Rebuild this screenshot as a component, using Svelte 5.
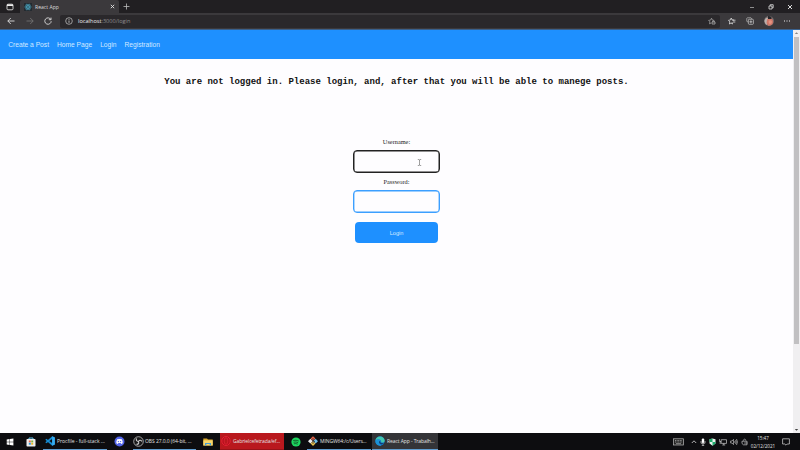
<script>
  const links = ['Create a Post', 'Home Page', 'Login', 'Registration'];
</script>

<div class="screen">
  <div class="tabs">
    <div class="tabmenu">
      <svg width="8" height="8" viewBox="0 0 8 8"><rect x="1" y="1.2" width="6" height="5.6" rx="1" fill="none" stroke="#ddd" stroke-width=".9" /><path d="M1 2.2H7" stroke="#eee" stroke-width="1.6" /></svg>
    </div>
    <div class="tab">
      <svg width="8" height="8" viewBox="0 0 8 8"><rect width="8" height="8" fill="#242a30" /><g fill="none" stroke="#4ba9c4" stroke-width=".6"><ellipse cx="4" cy="4" rx="3.3" ry="1.3" /><ellipse cx="4" cy="4" rx="3.3" ry="1.3" transform="rotate(60 4 4)" /><ellipse cx="4" cy="4" rx="3.3" ry="1.3" transform="rotate(120 4 4)" /></g><circle cx="4" cy="4" r=".7" fill="#4ba9c4" /></svg>
      <span>React App</span>
      <svg class="close" width="5" height="5" viewBox="0 0 5 5"><path d="M.8 .8L4.2 4.2M4.2 .8L.8 4.2" stroke="#e4e4e4" stroke-width=".9" /></svg>
    </div>
    <svg class="plus" width="7" height="7" viewBox="0 0 7 7"><path d="M3.5 .5V6.5M.5 3.5H6.5" stroke="#bbb" stroke-width=".8" /></svg>
    <div class="window">
      <svg width="8" height="8" viewBox="0 0 8 8"><path d="M2 4.5H6" stroke="#aaa" stroke-width=".8" /></svg>
      <svg width="8" height="8" viewBox="0 0 8 8"><path d="M2 3H5V6H2ZM3.2 3V1.7H6.2V4.8H5" fill="none" stroke="#ddd" stroke-width=".8" /></svg>
      <svg width="8" height="8" viewBox="0 0 8 8"><path d="M2 2L6 6M6 2L2 6" stroke="#eee" stroke-width=".9" /></svg>
    </div>
  </div>

  <div class="toolbar">
    <svg class="back" width="8" height="8" viewBox="0 0 8 8"><path d="M7.5 4H.8M3.8 1L.8 4L3.8 7" fill="none" stroke="#ddd" stroke-width=".9" /></svg>
    <svg class="fwd" width="8" height="8" viewBox="0 0 8 8"><path d="M.5 4H7.2M4.2 1L7.2 4L4.2 7" fill="none" stroke="#777" stroke-width=".8" /></svg>
    <svg class="reload" width="8" height="8" viewBox="0 0 8 8"><path d="M6.8 2.5A3.2 3.2 0 1 0 7.2 4.2M7 .6V2.7H4.8" fill="none" stroke="#ddd" stroke-width=".9" /></svg>
    <div class="address">
      <svg width="8" height="8" viewBox="0 0 8 8"><circle cx="4" cy="4" r="3.3" fill="none" stroke="#ccc" stroke-width=".7" /><path d="M4 3.5V5.8M4 2V2.8" stroke="#ddd" stroke-width=".8" /></svg>
      <span class="url"><b>localhost</b>:3000/login</span>
      <svg class="star" width="8" height="8" viewBox="0 0 8 8"><path d="M3 6L1.5 6.8L1.9 4.8L.6 3.4L2.6 3.1L3.5 1.2L4.4 3.1L6.2 3.4" fill="none" stroke="#aaa" stroke-width=".7" /><path d="M4 7V5H7V7ZM4.7 5V4H6.3V5" fill="none" stroke="#aaa" stroke-width=".8" /></svg>
    </div>
    <div class="actions">
      <svg width="8" height="8" viewBox="0 0 8 8"><path d="M3.2 1L4 2.9L6 3.1M4.1 5.2L4.5 7L3 6L1.4 7L1.8 4.9L.5 3.3L2.5 2.9L3.2 1M4.5 3.2H7.5M5 5H7.3" fill="none" stroke="#ddd" stroke-width=".8" /></svg>
      <svg width="8" height="8" viewBox="0 0 8 8"><path d="M2 5L.8 4.4V1.3L1.3 .8H5L6 2" fill="none" stroke="#bbb" stroke-width=".7" /><rect x="2.4" y="2.3" width="5" height="5" rx=".8" fill="none" stroke="#ccc" stroke-width=".7" /><path d="M4.9 3.3V6.3M3.4 4.8H6.4" stroke="#ddd" stroke-width=".7" /></svg>
      <svg class="avatar" width="10" height="10" viewBox="0 0 10 10"><circle cx="5" cy="5" r="4.9" fill="#776f70" /><path d="M.4 5C1 2 3 1 4 2L3 9Q1 8 .4 5Z" fill="#bbb1ae" /><path d="M3 4Q4 1 7 2Q10 4 8.5 8Q7 10 4 9.6L2.5 7Z" fill="#cf7768" /><path d="M4 0Q8 0 7.5 3L4 3Z" fill="#252529" /><path d="M4.7 5Q6 3.5 7.8 5V7Q6 9 4.8 7Z" fill="#e69280" /></svg>
      <svg width="8" height="8" viewBox="0 0 8 8"><path d="M1 4H2M3.5 4H4.5M6 4H7" stroke="#eee" stroke-width="1" /></svg>
    </div>
  </div>

  <div class="view">
    <div class="page">
      <nav>{#each links as link}<span>{link}</span>{/each}</nav>
      <h1>You are not logged in. Please login, and, after that you will be able to manege posts.</h1>
      <div class="form">
        <label for="user">Username:</label>
        <div class="field focus"><input id="user" type="text" />
          <svg class="cursor" width="5" height="7" viewBox="0 0 5 7"><path d="M.8 .5H2L2.5 .9L3 .5H4.2M2.5 .9V6.1M.8 6.5H2L2.5 6.1L3 6.5H4.2" fill="none" stroke="#777" stroke-width=".7" /></svg>
        </div>
        <label for="pass">Password:</label>
        <div class="field"><input id="pass" type="password" /></div>
        <button>Login</button>
      </div>
    </div>
    <div class="scroll">
      <svg width="7" height="6" viewBox="0 0 7 6"><path d="M1.8 4L3.5 2.2L5.2 4Z" fill="#888" /></svg>
      <div class="thumb"></div>
      <svg class="down" width="7" height="6" viewBox="0 0 7 6"><path d="M1.8 2L3.5 3.8L5.2 2Z" fill="#444" /></svg>
    </div>
  </div>

  <div class="taskbar">
    <div class="cell start"><svg width="8" height="8" viewBox="0 0 8 8"><path d="M.7 1.4L3.6 1V3.8H.7ZM4 .9L7.4 .5V3.8H4ZM.7 4.2H3.6V7L.7 6.6ZM4 4.2H7.4V7.5L4 7.1Z" fill="#fff" /></svg></div>
    <div class="cell store"><svg width="10" height="10" viewBox="0 0 10 10"><path d="M3 2.5V1H7V2.5" fill="none" stroke="#64c7ee" stroke-width="1" /><rect x=".5" y="2" width="9" height="7.5" rx=".8" fill="#eee" /><path d="M2.8 3.5H4.8V5.4H2.8Z" fill="#ee6548" /><path d="M5.2 3.5H7.2V5.4H5.2Z" fill="#86b93d" /><path d="M2.8 5.8H4.8V7.7H2.8Z" fill="#2b9bda" /><path d="M5.2 5.8H7.2V7.7H5.2Z" fill="#efb529" /></svg></div>
    <div class="cell app code"><svg width="10" height="10" viewBox="0 0 10 10"><path d="M7.2 .3L9.8 1.4V8.6L7.2 9.7L.3 3.7L1.4 2.7L7.1 7.1V2.9L1.4 7.3L.3 6.3Z" fill="#168bd2" /><path d="M7.2 .3L9.8 1.4V8.6L7.2 9.7Z" fill="#38adf1" /></svg><span>Procfile - full-stack ...</span></div>
    <div class="cell discord"><svg width="11" height="11" viewBox="0 0 11 11"><circle cx="5.5" cy="5.5" r="5" fill="#5365e9" /><path d="M3.2 3.3Q5.5 2.5 7.8 3.3Q9 5.3 8.6 7.2L7.2 7.9L6.6 7.1H4.4L3.8 7.9L2.4 7.2Q2 5.3 3.2 3.3Z" fill="#fff" /><circle cx="4.4" cy="5.6" r=".7" fill="#5365e9" /><circle cx="6.6" cy="5.6" r=".7" fill="#5365e9" /></svg></div>
    <div class="cell app obs"><svg width="11" height="11" viewBox="0 0 11 11"><circle cx="5.5" cy="5.5" r="4.8" fill="#181819" stroke="#ddd" stroke-width=".7" /><path d="M5.4 5.5Q2.5 5 3.6 2.5M5.4 5.5Q7.1 3 9 5.5M5.4 5.5Q6.7 8.4 3.5 8.4" fill="none" stroke="#ccc" stroke-width="1.1" /></svg><span>OBS 27.0.0 (64-bit, ...</span></div>
    <div class="cell folder"><svg width="10" height="8" viewBox="0 0 10 8"><path d="M.3 .6H4L5 1.5H9.7V7.4H.3Z" fill="#d9a72c" /><path d="M.3 2.3H9.7V7.5H.3Z" fill="#f8d66c" /><path d="M2 7.5V5H8V7.5H6.7V6H3.3V7.5Z" fill="#469ed5" /></svg></div>
    <div class="cell app red"><svg width="10" height="10" viewBox="0 0 10 10"><ellipse cx="5" cy="5" rx="4.2" ry="4.5" fill="#b5101c" stroke="#ee2639" stroke-width=".8" /><ellipse cx="5" cy="5" rx="1.9" ry="3.3" fill="#b9181e" stroke="#e22537" stroke-width=".7" /></svg><span>Gabrielcefetrada/ef...</span></div>
    <div class="cell spotify"><svg width="10" height="10" viewBox="0 0 10 10"><circle cx="5" cy="5" r="4.6" fill="#1ed760" /><path d="M2.2 3.5Q5 2.7 7.8 4M2.5 5.2Q5 4.5 7.2 5.7M2.8 6.8Q5 6.2 6.8 7.2" fill="none" stroke="#104a25" stroke-width=".8" /></svg></div>
    <div class="cell app git"><svg width="10" height="10" viewBox="0 0 10 10"><path d="M5 .2L7.4 2.6L5 5L2.6 2.6Z" fill="#e96349" /><path d="M2.4 2.8L4.8 5.2L2.4 7.6L0 5.2Z" fill="#eee" /><path d="M7.6 2.8L10 5.2L7.6 7.6L5.2 5.2Z" fill="#6abce8" /><path d="M5 5.2L7.4 7.6L5 10L2.6 7.6Z" fill="#edc34d" /><path d="M5 2V8M5 4L7 6" stroke="#333" stroke-width=".8" /></svg><span>MINGW64:/c/Users...</span></div>
    <div class="cell app edge"><svg width="10" height="10" viewBox="0 0 10 10"><circle cx="5" cy="5" r="4.7" fill="#1476c6" /><path d="M.4 4.5C1-.8 9-1 9.7 4.4C9.8 6.4 7.8 7 6.1 6.3C6.8 4 3.3 2.5 .4 4.5Z" fill="#42c7b1" /><path d="M.4 4.5C2 2.7 5 3.1 5.5 4.4C3.3 5.1 4 8.6 6.3 9.4C3.3 10.4 .1 8 .4 4.5Z" fill="#1b92d8" /><path d="M5.3 4.5C4 6 6.3 7.7 8.9 7C7.4 9.2 3.7 8.3 4 5.7Z" fill="#103e75" /></svg><span>React App - Trabalh...</span></div>
    <div class="tray">
      <svg class="keyboard" width="11" height="8" viewBox="0 0 11 8"><rect x=".5" y=".8" width="10" height="6.2" fill="#242424" stroke="#bbb" stroke-width=".7" /><path d="M2 2.5H9M2 4H9" stroke="#aaa" stroke-width=".8" stroke-dasharray="1 .6" /><path d="M3 5.7H8" stroke="#bbb" stroke-width=".7" /></svg>
      <svg width="6" height="8" viewBox="0 0 6 8"><path d="M.8 5L3 2.8L5.2 5" fill="none" stroke="#ddd" stroke-width=".8" /></svg>
      <svg width="6" height="8" viewBox="0 0 6 8"><rect x="1.8" y=".5" width="2.4" height="4.4" rx="1" fill="#fff" /><path d="M1 3V5.2H5V3M3 5V7.5M1.8 7.4H4.2" fill="none" stroke="#ddd" stroke-width=".7" /></svg>
      <svg width="7" height="8" viewBox="0 0 7 8"><path d="M.5 1.3L3.5 .5L6.5 1.3V5.5L3.5 7.7L.5 5.5Z" fill="#e9f4ee" /><path d="M.5 1.3L3.5 .5V4H6.5V5.5L3.5 7.7V4H.5Z" fill="#1fac6d" /></svg>
      <svg width="8" height="8" viewBox="0 0 8 8"><path d="M2.2 1.7H7.5V5.4H2.2ZM4.8 5.4V7M3.3 7H6.2M.6 1V3.5H2M1.2 3.5V6" fill="none" stroke="#ccc" stroke-width=".7" /></svg>
      <svg width="8" height="8" viewBox="0 0 8 8"><path d="M.6 3H2L3.5 1.4V6.6L2 5H.6ZM4.7 3Q5.5 4 4.7 5M5.6 2Q7 4 5.6 6M6.5 1Q8.4 4 6.5 7" fill="none" stroke="#bbb" stroke-width=".7" /></svg>
      <svg width="7" height="8" viewBox="0 0 7 8"><path d="M1 3.2H6V6.8H2.5L1 5.5ZM2 2.5Q3.5 0 5 2.2M3.2 5H6.4" fill="none" stroke="#ccc" stroke-width=".7" /></svg>
    </div>
    <div class="clock"><span>15:47</span><span>02/12/2021</span></div>
    <svg class="notice" width="8" height="8" viewBox="0 0 8 8"><path d="M.6 .8H7.4V6H5.2L4 7.2L2.8 6H.6Z" fill="none" stroke="#ddd" stroke-width=".7" /></svg>
  </div>
</div>

<style>
  .screen { width: 800px; height: 450px; display: flex; flex-direction: column; overflow: hidden; background: #fefdff; font-family: "Open Sans", "Noto Sans", sans-serif; }
  svg { display: block; flex: none; }
  .tabs { height: 13px; display: flex; align-items: center; background: #211f22; flex: none; }
  .tabmenu { width: 20px; padding-left: 6px; box-sizing: border-box; }
  .tab { width: 99px; height: 13px; display: flex; align-items: center; box-sizing: border-box; padding: 0 4px; gap: 3px; background: #3b393c; color: #ddd; font-size: 5.1px; border-radius: 2px 2px 0 0; }
  .close { margin-left: auto; }
  .plus { margin-left: 4px; }
  .window { margin-left: auto; display: flex; gap: 11px; padding-right: 6px; }
  .toolbar { height: 17px; flex: none; display: flex; align-items: center; background: #3b393c; padding-left: 7px; border-bottom: 1px solid #39618e; box-sizing: border-box; }
  .fwd { margin-left: 11px; }
  .reload { margin-left: 10px; }
  .address { display: flex; align-items: center; width: 660px; height: 13px; margin-left: 8px; padding: 0 4px 0 5px; box-sizing: border-box; background: #2a282b; border-radius: 2px; }
  .url { margin-left: 5px; color: #8e8c8f; font-size: 5.6px; white-space: nowrap; }
  .url b { font-weight: 400; color: #eee; }
  .star { margin-left: auto; }
  .actions { display: flex; align-items: center; gap: 10px; margin-left: 8px; }
  .avatar { margin-right: -1px; }
  .view { flex: 1; min-height: 0; display: flex; }
  .page { flex: 1; display: flex; flex-direction: column; align-items: center; }
  nav { align-self: stretch; height: 29px; flex: none; display: flex; align-items: center; gap: 8px; padding-left: 8.3px; box-sizing: border-box; background: #1e90ff; color: #d3e9ff; font: 6.67px "Liberation Sans", Arial, sans-serif; }
  h1 { margin: 18px 0 0; height: 10px; font: bold 9px/10px "Liberation Mono", "Courier New", monospace; color: #111; white-space: nowrap; }
  .form { display: flex; flex-direction: column; align-items: center; margin-top: 51px; }
  label { height: 8px; font: 6.3px/8px "Liberation Serif", serif; color: #222; }
  .field { position: relative; width: 87px; height: 23px; margin: 4px 0 5px; }
  input { display: block; width: 100%; height: 100%; box-sizing: border-box; border: 1px solid #3c9fff; box-shadow: inset 0 0 0 .4px #3c9fff; border-radius: 4px; background: #fefdff; outline: none; }
  .focus input { border-color: #222; box-shadow: inset 0 0 0 .5px #222; }
  .cursor { position: absolute; left: 64px; top: 9px; }
  button { width: 83px; height: 21px; margin-top: 4px; padding: 0; border: 0; border-radius: 4px; background: #1e90ff; color: #d3e9ff; font: 5.6px "Liberation Sans", Arial, sans-serif; }
  .scroll { width: 7px; display: flex; flex-direction: column; align-items: center; background: #f0eff1; }
  .thumb { width: 5px; height: 307px; margin-top: 1px; background: #c1c0c2; }
  .down { margin-top: auto; }
  .taskbar { height: 17px; flex: none; display: flex; align-items: stretch; background: #0d0d10; color: #e2e2e2; }
  .cell { display: flex; align-items: center; justify-content: center; flex: none; }
  .start { width: 20px; }
  .store { width: 22px; }
  .discord { width: 25px; }
  .folder { width: 24px; }
  .spotify { width: 23px; }
  .app { justify-content: flex-start; box-sizing: border-box; padding-left: 2px; gap: 2px; border-bottom: 1px solid #5f9dd1; font-size: 5px; white-space: nowrap; }
  .code { width: 64px; margin-left: 1px; }
  .obs { width: 63px; margin-left: 1px; padding-left: 0; gap: 1px; }
  .obs span { letter-spacing: -.06px; }
  .red { width: 64px; background: #b9181e; border-color: #971319; padding-left: 1px; }
  .red span { letter-spacing: -.1px; }
  .git { width: 64px; margin-right: 1px; padding-left: 1px; }
  .git span { letter-spacing: -.09px; }
  .edge { width: 66px; padding-left: 3px; background: #343438; }
  .edge span { letter-spacing: -.08px; }
  .tray { margin-left: auto; display: flex; align-items: center; gap: 3px; }
  .keyboard { margin-right: 4px; }
  .clock { width: 30px; display: flex; flex-direction: column; justify-content: center; align-items: center; font-size: 4.6px; line-height: 8px; white-space: nowrap; }
  .notice { align-self: center; margin: 0 10px 0 4px; }
</style>
